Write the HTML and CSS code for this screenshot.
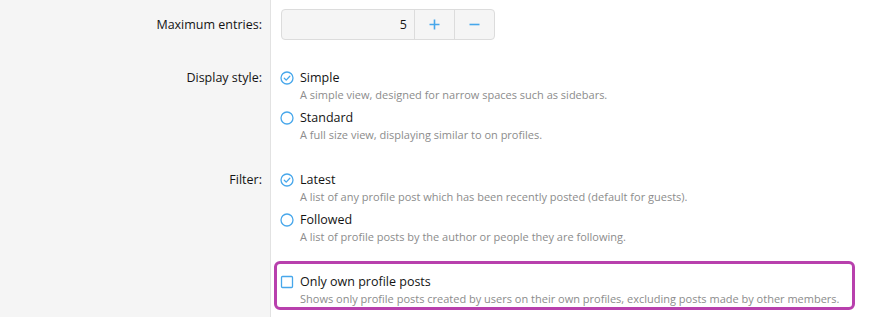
FILE: index.html
```html
<!DOCTYPE html>
<html lang="en">
<head>
<meta charset="utf-8">
<title>Widget options</title>
<link rel="stylesheet" href="styles.css">
</head>
<body>
<div class="form">
  <div class="row row-first">
    <div class="label label-input">Maximum entries:</div>
    <div class="field">
      <div class="spinner">
        <div class="num">5</div>
        <div class="btn"><svg width="11" height="11" viewBox="0 0 11 11"><path d="M5.5 0.5v10M0.5 5.5h10" stroke="#47a7eb" stroke-width="1.6" fill="none"/></svg></div>
        <div class="btn"><svg width="11" height="11" viewBox="0 0 11 11"><path d="M0.5 5.5h10" stroke="#47a7eb" stroke-width="1.6" fill="none"/></svg></div>
      </div>
    </div>
  </div>

  <div class="row">
    <div class="label">Display style:</div>
    <div class="field">
      <div class="option">
        <div class="opt-title"><svg class="ico" width="14" height="14" viewBox="0 0 14 14"><circle cx="7" cy="7" r="6" stroke="#47a7eb" stroke-width="1.3" fill="none"/><path d="M4.3 7.2l1.9 1.9 3.6-3.8" stroke="#47a7eb" stroke-width="1.3" fill="none" stroke-linecap="round" stroke-linejoin="round"/></svg><span>Simple</span></div>
        <div class="hint">A simple view, designed for narrow spaces such as sidebars.</div>
      </div>
      <div class="option">
        <div class="opt-title"><svg class="ico" width="14" height="14" viewBox="0 0 14 14"><circle cx="7" cy="7" r="6" stroke="#47a7eb" stroke-width="1.3" fill="none"/></svg><span>Standard</span></div>
        <div class="hint">A full size view, displaying similar to on profiles.</div>
      </div>
    </div>
  </div>

  <div class="row">
    <div class="label">Filter:</div>
    <div class="field">
      <div class="option">
        <div class="opt-title"><svg class="ico" width="14" height="14" viewBox="0 0 14 14"><circle cx="7" cy="7" r="6" stroke="#47a7eb" stroke-width="1.3" fill="none"/><path d="M4.3 7.2l1.9 1.9 3.6-3.8" stroke="#47a7eb" stroke-width="1.3" fill="none" stroke-linecap="round" stroke-linejoin="round"/></svg><span>Latest</span></div>
        <div class="hint">A list of any profile post which has been recently posted (default for guests).</div>
      </div>
      <div class="option">
        <div class="opt-title"><svg class="ico" width="14" height="14" viewBox="0 0 14 14"><circle cx="7" cy="7" r="6" stroke="#47a7eb" stroke-width="1.3" fill="none"/></svg><span>Followed</span></div>
        <div class="hint">A list of profile posts by the author or people they are following.</div>
      </div>
    </div>
  </div>

  <div class="row row-last">
    <div class="label"></div>
    <div class="field field-highlight">
      <div class="highlight">
        <div class="option">
          <div class="opt-title"><svg class="ico" width="14" height="14" viewBox="0 0 14 14"><rect x="1.5" y="1.5" width="11" height="11" rx="1" stroke="#47a7eb" stroke-width="1.3" fill="none"/></svg><span>Only own profile posts</span></div>
          <div class="hint">Shows only profile posts created by users on their own profiles, excluding posts made by other members.</div>
        </div>
      </div>
    </div>
  </div>
</div>
</body>
</html>
```

FILE: styles.css
```css
html, body {
  margin: 0;
  padding: 0;
  background: #fff;
}
body {
  font-family: "Open Sans", "Noto Sans", sans-serif;
  color: #141414;
  height: 317px;
  overflow: hidden;
}
.form {
  display: flex;
  flex-direction: column;
  min-height: 317px;
}
.row {
  display: flex;
  align-items: stretch;
}
.row-last {
  flex: 1;
}
.label {
  width: 262px;
  flex: none;
  background: #f5f5f5;
  border-right: 1px solid #e2e2e2;
  text-align: right;
  padding: 15px 8px 13px 0;
  font-size: 12.5px;
  line-height: 20px;
  color: #141414;
}
.label-input {
  padding-top: 15px;
}
.field {
  flex: 1;
  padding: 14px 10px 13px 10px;
}
.row-first .field {
  padding-top: 9px;
}
.spinner {
  display: flex;
  width: 212px;
  height: 29px;
  border: 1px solid #dcdcdc;
  border-radius: 4px;
  background: #f5f5f5;
}
.num {
  flex: 1;
  text-align: right;
  padding-right: 7px;
  font-size: 12.5px;
  line-height: 29px;
}
.btn {
  width: 39px;
  border-left: 1px solid #dcdcdc;
  display: flex;
  align-items: center;
  justify-content: center;
}
.option + .option {
  margin-top: 5px;
}
.opt-title {
  display: flex;
  align-items: center;
  font-size: 12.5px;
  line-height: 20px;
  padding-top: 1px;
}
.ico {
  flex: none;
  margin-right: 6px;
  margin-left: -1px;
}
.hint {
  padding-left: 19px;
  margin-top: -1px;
  font-size: 11px;
  line-height: 15px;
  color: #8c8c8c;
  white-space: nowrap;
}
.field-highlight {
  padding: 4px 37px 0 3px;
}
.highlight {
  border: 3px solid #b840ad;
  border-radius: 6px;
  padding: 7px 10px 1px 4px;
}
```
